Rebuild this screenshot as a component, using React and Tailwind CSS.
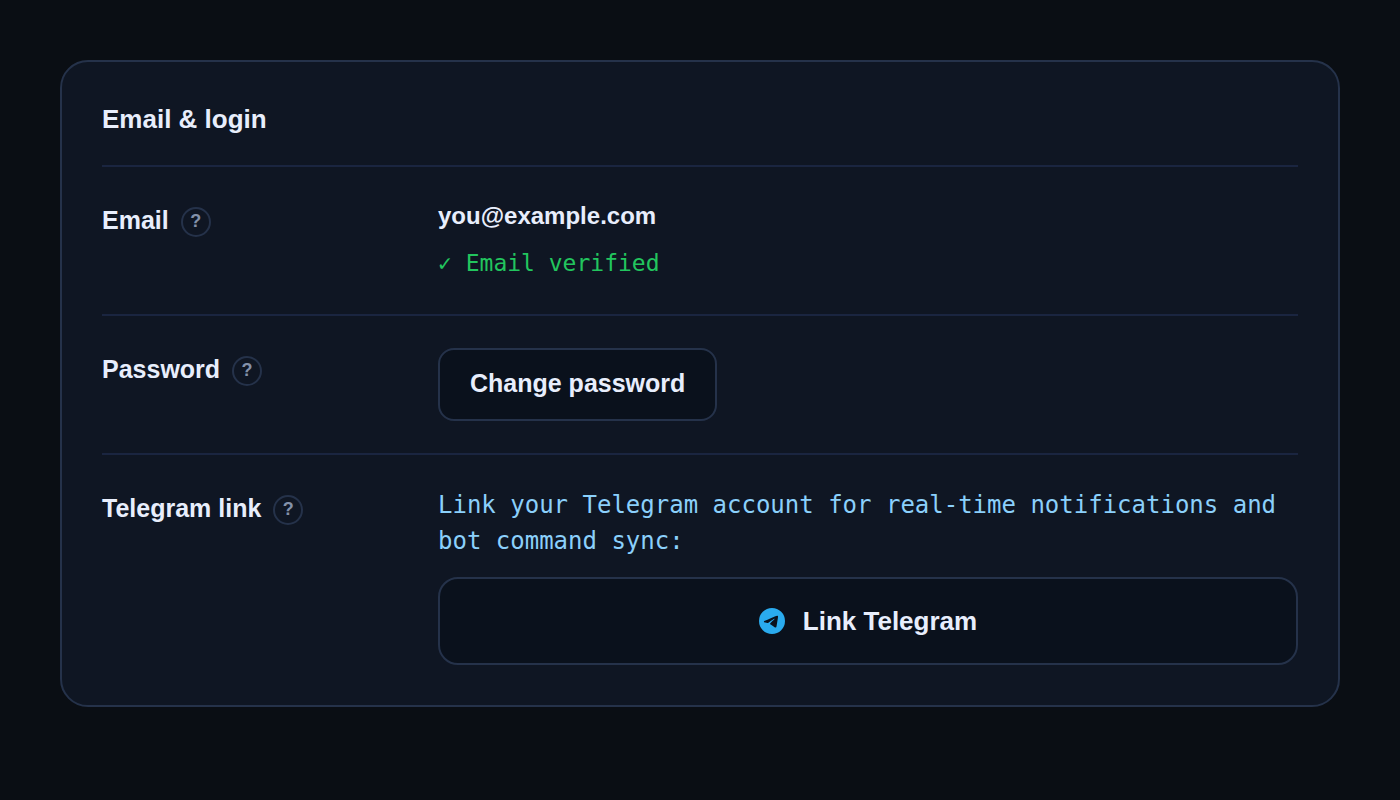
function TelegramIcon() {
  return (
    <svg viewBox="0 0 24 24" className="size-[26px] shrink-0" fill="#2aabee" aria-hidden="true">
      <path d="M11.944 0A12 12 0 0 0 0 12a12 12 0 0 0 12 12 12 12 0 0 0 12-12A12 12 0 0 0 12 0a12 12 0 0 0-.056 0zm4.962 7.224c.1-.002.321.023.465.14a.506.506 0 0 1 .171.325c.016.093.036.306.02.472-.18 1.898-.962 6.502-1.36 8.627-.168.9-.499 1.201-.82 1.23-.696.065-1.225-.46-1.9-.902-1.056-.693-1.653-1.124-2.678-1.8-1.185-.78-.417-1.21.258-1.91.177-.184 3.247-2.977 3.307-3.23.007-.032.014-.15-.056-.212s-.174-.041-.249-.024c-.106.024-1.793 1.14-5.061 3.345-.48.33-.913.49-1.302.48-.428-.008-1.252-.241-1.865-.44-.752-.245-1.349-.374-1.297-.789.027-.216.325-.437.893-.663 3.498-1.524 5.83-2.529 6.998-3.014 3.332-1.386 4.025-1.627 4.476-1.635z" />
    </svg>
  );
}

function SettingRow({ label, children }) {
  return (
    <section className="grid grid-cols-[300px_minmax(0,1fr)] items-start gap-9 border-t-2 border-[#1a2540] py-8 last:pb-0">
      <div className="flex items-start gap-3 pt-2">
        <h3 className="text-[25px] leading-[26px] font-bold">{label}</h3>
        <button
          type="button"
          aria-label={`About ${label}`}
          className="flex size-[30px] items-center justify-center rounded-full border-2 border-[#25324a] pb-[2px] text-lg leading-5 font-bold text-[#8391a9]"
        >
          ?
        </button>
      </div>
      <div>{children}</div>
    </section>
  );
}

export default function App() {
  return (
    <main className="min-h-screen bg-[#0a0e14] p-[60px] font-['Liberation_Sans',Arial,sans-serif] text-[#e8eefc]">
      <div className="rounded-[28px] border-2 border-[#25324a] bg-[#0f1623] p-10">
        <h2 className="pb-[29px] text-[26px] leading-[34px] font-bold">Email &amp; login</h2>

        <SettingRow label="Email">
          <p className="text-2xl leading-[34px] font-bold">you@example.com</p>
          <p className="mt-3 font-['DejaVu_Sans_Mono',monospace] text-[23px] leading-[37px] text-[#22c55e]">
            ✓ Email verified
          </p>
        </SettingRow>

        <SettingRow label="Password">
          <button
            type="button"
            className="block rounded-2xl border-2 border-[#25324a] bg-[#0a111c] px-[30px] pt-[19px] pb-[21px] text-[25px] leading-[29px] font-bold"
          >
            Change password
          </button>
        </SettingRow>

        <SettingRow label="Telegram link">
          <p className="font-['DejaVu_Sans_Mono',monospace] text-2xl leading-9 text-[#8bd0fb]">
            Link your Telegram account for real-time notifications and bot command sync:
          </p>
          <button
            type="button"
            className="mt-[18px] flex w-full items-center justify-center gap-[18px] rounded-[20px] border-2 border-[#25324a] bg-[#0a111c] py-[27px] text-[26px] leading-[30px] font-bold"
          >
            <TelegramIcon />
            Link Telegram
          </button>
        </SettingRow>
      </div>
    </main>
  );
}
